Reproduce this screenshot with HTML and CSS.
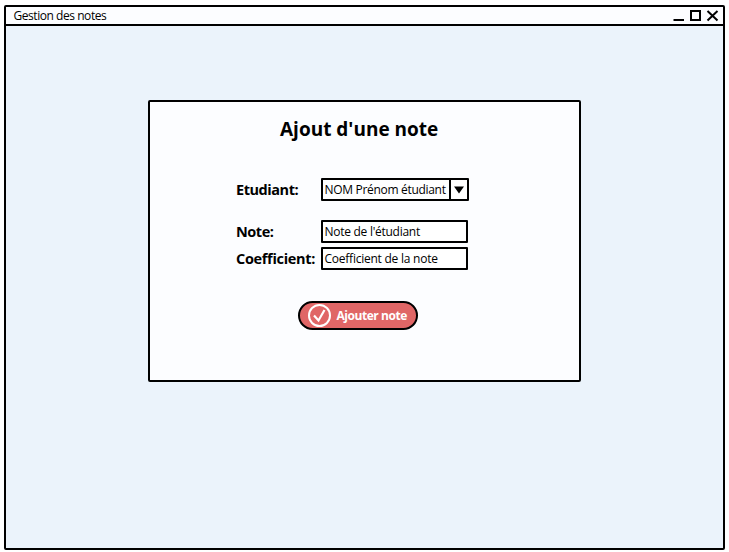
FILE: index.html
```html
<!DOCTYPE html>
<html lang="fr">
<head>
<meta charset="utf-8">
<title>Gestion des notes</title>
<link rel="stylesheet" href="styles.css">
</head>
<body>
<div class="window">
  <header class="titlebar">
    <span class="caption">Gestion des notes</span>
    <svg class="controls" width="50" height="17" viewBox="0 0 50 17" fill="none" stroke="#000" stroke-width="2">
      <path d="M3.500 13H14"/>
      <rect x="21" y="4" width="9" height="9"/>
      <path d="M37.500 4L47.500 13.500M47.500 4L37.500 13.500"/>
    </svg>
  </header>
  <main class="content">
    <form class="card">
      <h1 class="heading">Ajout d'une note</h1>
      <div class="row row-student">
        <label class="label label-student">Etudiant:</label>
        <div class="field select">
          <span class="value value-student">NOM Prénom étudiant</span>
          <span class="arrow"><svg width="10" height="8" viewBox="0 0 10 8"><path d="M0 0.500H10L5 7.500Z"/></svg></span>
        </div>
      </div>
      <div class="row row-note">
        <label class="label label-note">Note:</label>
        <div class="field"><span class="value value-note">Note de l'étudiant</span></div>
      </div>
      <div class="row row-coef">
        <label class="label label-coef">Coefficient:</label>
        <div class="field"><span class="value value-coef">Coefficient de la note</span></div>
      </div>
      <button class="submit" type="button">
        <svg width="24" height="24" viewBox="0 0 24 24" fill="none" stroke="#fff"><circle cx="11.500" cy="11.500" r="10.500" stroke-width="2"/><path d="M6 11.500L10.500 16.500L16.500 6" stroke-width="2.200"/></svg>
        <span>Ajouter note</span>
      </button>
    </form>
  </main>
</div>
</body>
</html>
```

FILE: styles.css
```css
* { box-sizing: border-box; }
body {
  margin: 0;
  padding: 5px 4px 2px;
  background: #fff;
  color: #000;
  font-family: "Segoe UI", "Open Sans", "Noto Sans", sans-serif;
}
.window {
  width: 721px;
  height: 545px;
  border: 2px solid #000;
  border-radius: 2px;
  background: #ebf3fb;
}
.titlebar {
  display: flex;
  justify-content: space-between;
  height: 19px;
  border-bottom: 2px solid #000;
  background: #fcfdff;
  padding: 0 3px 0 8px;
}
.caption { margin-left: -0.5px; font-size: 12px; line-height: 18px; letter-spacing: -0.45px; white-space: nowrap; }
.content { padding: 74px 142px; }
.card {
  display: flex;
  flex-direction: column;
  width: 433px;
  height: 282px;
  border: 2px solid #000;
  border-radius: 2px;
  background: #fcfdff;
}
.heading {
  margin: 13px 0 0 130px;
  font-size: 19px;
  font-weight: 700;
  line-height: 28px;
  letter-spacing: 0;
  white-space: nowrap;
}
.row { display: flex; height: 23px; margin-left: 86px; }
.row-student { margin-top: 35px; }
.row-note { margin-top: 19px; }
.row-coef { margin-top: 4px; }
.label { width: 85px; font-size: 14.5px; font-weight: 700; line-height: 23px; white-space: nowrap; }
.label-student, .label-note { letter-spacing: -0.45px; }
.label-coef { letter-spacing: -0.32px; }
.field {
  display: flex;
  width: 147px;
  border: 2px solid #000;
  border-radius: 1px;
  background: #fff;
  padding-left: 1.5px;
}
.select { width: 148px; justify-content: space-between; }
.value { font-size: 12px; line-height: 20px; white-space: nowrap; }
.value-student { letter-spacing: -0.31px; }
.value-note { letter-spacing: -0.27px; }
.value-coef { letter-spacing: -0.24px; }
.arrow {
  display: flex;
  align-items: center;
  justify-content: center;
  width: 18px;
  border-left: 2px solid #000;
}
.submit {
  display: flex;
  align-items: center;
  gap: 4.5px;
  width: 120px;
  height: 29px;
  margin: 31px 0 0 148px;
  padding: 0 0 0 8px;
  border: 2px solid #000;
  border-radius: 15px;
  background: #e06666;
  color: #fff;
  font: 700 12px/24px "Segoe UI", "Open Sans", "Noto Sans", sans-serif;
  letter-spacing: -0.45px;
  white-space: nowrap;
}
```
